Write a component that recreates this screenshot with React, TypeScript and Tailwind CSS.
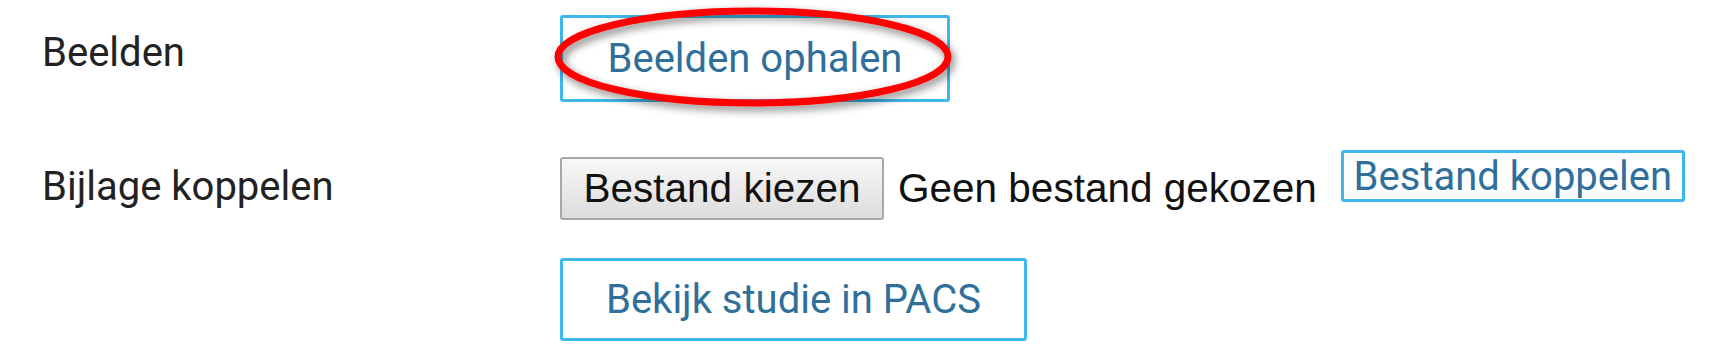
import React from "react";

const roboto = { fontFamily: "Roboto, 'Liberation Sans', sans-serif" };
const arial = { fontFamily: "'Liberation Sans', Arial, sans-serif" };

export default function App() {
  return (
    <div className="relative h-[362px] w-[1722px] overflow-hidden bg-white" style={roboto}>
      <div className="flex flex-col pl-[42px] pt-[15px]">
        {/* Row 1 */}
        <div className="flex items-start">
          <div className="w-[518px] pt-[18px] text-[40px] leading-none text-[#222]">Beelden</div>
          <button className="flex h-[87px] w-[390px] items-center justify-center rounded-[3px] border-[3px] border-[#3db8ec] bg-white text-[40px] leading-none text-[#316f9b]">
            Beelden ophalen
          </button>
        </div>

        {/* Row 2 */}
        <div className="mt-[48px] flex items-start">
          <div className="w-[518px] pt-[17px] text-[40px] leading-none text-[#222]">Bijlage koppelen</div>
          <div className="flex items-start">
            <button
              className="mt-[7px] flex h-[63px] w-[324px] items-center justify-center rounded-[3px] border-2 border-[#a8a8a8] bg-gradient-to-b from-[#f8f8f8] to-[#dcdcdc] text-[40.5px] leading-none text-[#111]"
              style={arial}
            >
              Bestand kiezen
            </button>
            <span className="ml-[14px] mt-[18px] text-[40.5px] leading-none text-[#111]" style={arial}>
              Geen bestand gekozen
            </span>
            <button className="ml-[24px] flex h-[52px] w-[344px] items-start justify-center rounded-[3px] border-[3px] border-[#3db8ec] bg-white pt-[4px] text-[40px] leading-none text-[#316f9b]">
              Bestand koppelen
            </button>
          </div>
        </div>

        {/* Row 3 */}
        <div className="mt-[38px] flex items-start">
          <div className="w-[518px]" />
          <button className="flex h-[83px] w-[467px] items-center justify-center rounded-[3px] border-[3px] border-[#3db8ec] bg-white text-[40px] leading-none text-[#316f9b]">
            Bekijk studie in PACS
          </button>
        </div>
      </div>

      {/* Red annotation ellipse */}
      <svg className="pointer-events-none absolute left-0 top-0" width="1722" height="362">
        <defs>
          <filter id="sh" x="-20%" y="-50%" width="140%" height="200%">
            <feGaussianBlur in="SourceAlpha" stdDeviation="4" />
            <feOffset dx="3" dy="4" result="b" />
            <feComponentTransfer>
              <feFuncA type="linear" slope="0.5" />
            </feComponentTransfer>
            <feMerge>
              <feMergeNode />
              <feMergeNode in="SourceGraphic" />
            </feMerge>
          </filter>
        </defs>
        <ellipse cx="753" cy="57" rx="195" ry="46" fill="none" stroke="#ff0000" strokeWidth="7" filter="url(#sh)" />
      </svg>
    </div>
  );
}
